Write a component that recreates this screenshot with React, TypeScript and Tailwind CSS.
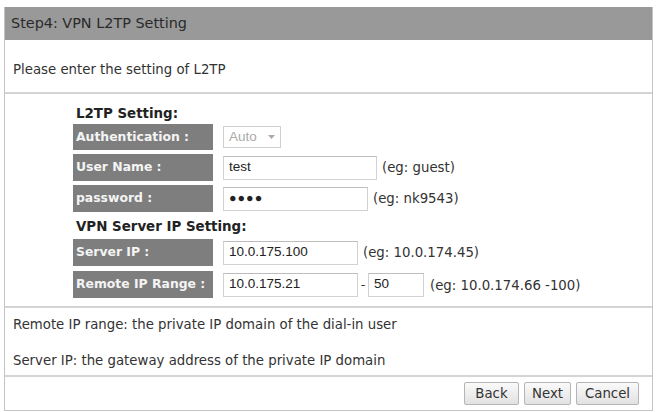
const verdana = "font-['DejaVu_Sans',Verdana,sans-serif]"
const arial = "font-['Liberation_Sans',Arial,sans-serif]"

function Label({ children }: { children: string }) {
  return (
    <div className="w-[140px] h-full bg-[#7e7e7e] flex items-center pl-[3px] text-[12.4px] font-bold text-[#f4f4f4]">
      {children}
    </div>
  )
}

function TextBox({ value, width, secret }: { value: string; width: string; secret?: boolean }) {
  return (
    <div
      className={`${width} h-[24px] border border-[#d2d2d2] border-t-[#bdbdbd] bg-white flex items-center pl-[5px] ${arial} text-[13.5px] text-[#222]`}
    >
      {secret ? <span className="tracking-[1px] text-[12.5px]">●●●●</span> : value}
    </div>
  )
}

function Hint({ children }: { children: string }) {
  return <span className="text-[13.3px] text-[#333]">{children}</span>
}

export default function App() {
  return (
    <div className={`w-[656px] h-[412px] bg-white pt-[7px] pl-[4px] ${verdana}`}>
      <div className="w-[649px] border-l border-r border-[#c4c4c4] flex flex-col">
        <div className="h-[33px] bg-[#999999] flex items-center pl-[6px] text-[14.4px] text-[#2a2a2a]">
          Step4: VPN L2TP Setting
        </div>

        <div className="h-[54px] flex items-center pl-[8px] pt-[8px] text-[13.3px] text-[#333] border-b-2 border-[#d4d4d4]">
          Please enter the setting of L2TP
        </div>

        <div className="pt-[10px] pb-[8px] pl-[68px] flex flex-col border-b-2 border-[#d4d4d4]">
          <div className="h-[20px] flex items-center pl-[3px] text-[13.4px] font-bold text-[#222]">L2TP Setting:</div>

          <div className="h-[26px] flex items-center gap-[10px]">
            <Label>Authentication :</Label>
            <div className={`w-[58px] h-[22px] border border-[#cfcfcf] flex items-center justify-between pl-[5px] pr-[5px] ${arial} text-[13.5px] text-[#aaa]`}>
              <span>Auto</span>
              <svg width="7" height="4" viewBox="0 0 7 4">
                <path d="M0 0 L7 0 L3.5 4 Z" fill="#aaa" />
              </svg>
            </div>
          </div>

          <div className="h-[27px] mt-[4px] flex items-center gap-[10px]">
            <Label>User Name :</Label>
            <div className="flex items-center gap-[5px]">
              <TextBox value="test" width="w-[154px]" />
              <Hint>(eg: guest)</Hint>
            </div>
          </div>

          <div className="h-[27px] mt-[4px] flex items-center gap-[10px]">
            <Label>password :</Label>
            <div className="flex items-center gap-[5px]">
              <TextBox value="" width="w-[145px]" secret />
              <Hint>(eg: nk9543)</Hint>
            </div>
          </div>

          <div className="h-[22px] mt-[4px] flex items-center pl-[3px] text-[13.4px] font-bold text-[#222]">
            VPN Server IP Setting:
          </div>

          <div className="h-[27px] mt-[1px] flex items-center gap-[10px]">
            <Label>Server IP :</Label>
            <div className="flex items-center gap-[5px]">
              <TextBox value="10.0.175.100" width="w-[135px]" />
              <Hint>(eg: 10.0.174.45)</Hint>
            </div>
          </div>

          <div className="h-[27px] mt-[5px] flex items-center gap-[10px]">
            <Label>Remote IP Range :</Label>
            <div className="flex items-center">
              <TextBox value="10.0.175.21" width="w-[135px]" />
              <span className="w-[10px] text-center text-[13px] text-[#333]">-</span>
              <TextBox value="50" width="w-[56px]" />
              <span className="ml-[6px]">
                <Hint>(eg: 10.0.174.66 -100)</Hint>
              </span>
            </div>
          </div>
        </div>

        <div className="pt-[8px] pb-[5px] pl-[8px] flex flex-col gap-[18px] text-[13.3px] text-[#333] border-b-2 border-[#d4d4d4]">
          <div className="h-[18px] flex items-center">Remote IP range: the private IP domain of the dial-in user</div>
          <div className="h-[18px] flex items-center">Server IP: the gateway address of the private IP domain</div>
        </div>

        <div className="h-[34px] flex items-center justify-end gap-[5px] pr-[13px] border-b border-[#c4c4c4]">
          {[
            ["Back", "w-[55px]"],
            ["Next", "w-[47px]"],
            ["Cancel", "w-[63px]"],
          ].map(([t, w]) => (
            <button
              key={t}
              className={`${w} h-[23px] border border-[#b5b5b5] rounded-[2px] bg-gradient-to-b from-[#fafafa] to-[#e2e2e2] text-[13.3px] text-[#333] flex items-center justify-center`}
            >
              {t}
            </button>
          ))}
        </div>
      </div>
    </div>
  )
}
